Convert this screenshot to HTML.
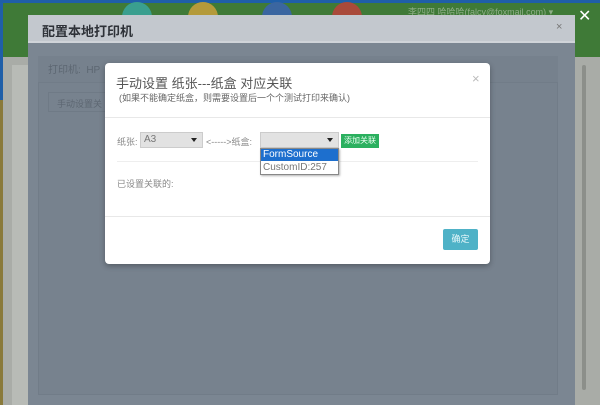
<!DOCTYPE html>
<html><head><meta charset="utf-8"><style>
*{margin:0;padding:0;box-sizing:border-box}
body{width:600px;height:405px;overflow:hidden;position:relative;background:#1f5fa8;font-family:"Liberation Sans","Noto Sans CJK SC",sans-serif}
.a{position:absolute}
.arr{position:absolute;right:5px;top:5px;width:0;height:0;border-left:3px solid transparent;border-right:3px solid transparent;border-top:4px solid #222}
</style></head><body>
<div class="a" style="left:0;top:100px;width:4px;height:305px;background:#8a7a3a"></div>
<div class="a" style="left:3px;top:3px;width:597px;height:54px;background:#3f7a37"></div>
<div class="a" style="left:3px;top:57px;width:597px;height:348px;background:#a9aca7"></div>
<div class="a" style="left:12px;top:65px;width:20px;height:340px;background:#b8bbb6"></div>
<div class="a" style="left:122px;top:2px;width:30px;height:30px;border-radius:50%;background:#3a9f8f"></div>
<div class="a" style="left:188px;top:2px;width:30px;height:30px;border-radius:50%;background:#b49a3a"></div>
<div class="a" style="left:262px;top:2px;width:30px;height:30px;border-radius:50%;background:#3b66a0"></div>
<div class="a" style="left:332px;top:2px;width:30px;height:30px;border-radius:50%;background:#a94a3a"></div>
<div class="a" style="left:408px;top:5px;font-size:9px;color:#8fae88;white-space:nowrap">李四四 哈哈哈(falcy@foxmail.com) ▾</div>
<div class="a" style="left:578px;top:6px;font-size:16px;color:#fff">✕</div>
<div class="a" style="left:582px;top:65px;width:4px;height:325px;background:#8c8f8a;border-radius:2px"></div>
<div class="a" style="left:28px;top:15px;width:547px;height:390px;background:#7b8692"></div>
<div class="a" style="left:28px;top:15px;width:547px;height:28px;background:#c3c8ce;border-bottom:2px solid #d0d4d9"></div>
<div class="a" style="left:42px;top:21px;font-size:13px;font-weight:bold;color:#2e3238">配置本地打印机</div>
<div class="a" style="left:556px;top:21px;font-size:11px;color:#777">×</div>
<div class="a" style="left:38px;top:56px;width:520px;height:26px;background:#76818d"></div>
<div class="a" style="left:48px;top:61px;font-size:10px;color:#5d6772">打印机:&nbsp; HP</div>
<div class="a" style="left:38px;top:82px;width:520px;height:313px;background:#77828e;border:1px solid #717c88"></div>
<div class="a" style="left:48px;top:92px;width:80px;height:20px;border:1px solid #6f7a86;font-size:9px;color:#5d6772;padding:4px 8px">手动设置关</div>
<div class="a" style="left:105px;top:63px;width:385px;height:201px;background:#fff;border-radius:4px;box-shadow:0 2px 6px rgba(0,0,0,.3)"></div>
<div class="a" style="left:116px;top:73px;font-size:13px;color:#555">手动设置 纸张---纸盒 对应关联</div>
<div class="a" style="left:119px;top:91px;font-size:9px;color:#666">(如果不能确定纸盒，则需要设置后一个个测试打印来确认)</div>
<div class="a" style="left:472px;top:71px;font-size:13px;color:#bbb">×</div>
<div class="a" style="left:105px;top:117px;width:385px;height:1px;background:#e8e8e8"></div>
<div class="a" style="left:117px;top:135px;font-size:9px;color:#888">纸张:</div>
<div class="a" style="left:140px;top:132px;width:63px;height:16px;background:#e2e2e2;border:1px solid #ccc;font-size:10px;line-height:14px;color:#777;padding-left:3px">A3<span class="arr"></span></div>
<div class="a" style="left:206px;top:135px;font-size:9px;color:#888">&lt;-----&gt;纸盒:</div>
<div class="a" style="left:260px;top:132px;width:79px;height:16px;background:#e2e2e2;border:1px solid #ccc"><span class="arr"></span></div>
<div class="a" style="left:341px;top:134px;width:38px;height:14px;background:#2bb05f;font-size:8px;color:#e8fff0;text-align:center;line-height:14px">添加关联</div>
<div class="a" style="left:117px;top:161px;width:361px;height:1px;background:#eee"></div>
<div class="a" style="left:260px;top:148px;width:79px;height:27px;background:#fff;border:1px solid #888;box-shadow:1px 1px 2px rgba(0,0,0,.3)"></div>
<div class="a" style="left:261px;top:149px;width:77px;height:12px;background:#1d6fce;color:#fff;font-size:10px;line-height:12px;padding-left:2px">FormSource</div>
<div class="a" style="left:261px;top:161px;width:77px;height:13px;color:#777;font-size:10px;line-height:13px;padding-left:2px">CustomID:257</div>
<div class="a" style="left:117px;top:177px;font-size:9px;color:#888">已设置关联的:</div>
<div class="a" style="left:105px;top:216px;width:385px;height:1px;background:#e8e8e8"></div>
<div class="a" style="left:443px;top:229px;width:35px;height:21px;background:#4fb2c7;border-radius:2px;font-size:9px;color:#e8f8fb;text-align:center;line-height:21px">确定</div>
</body></html>
